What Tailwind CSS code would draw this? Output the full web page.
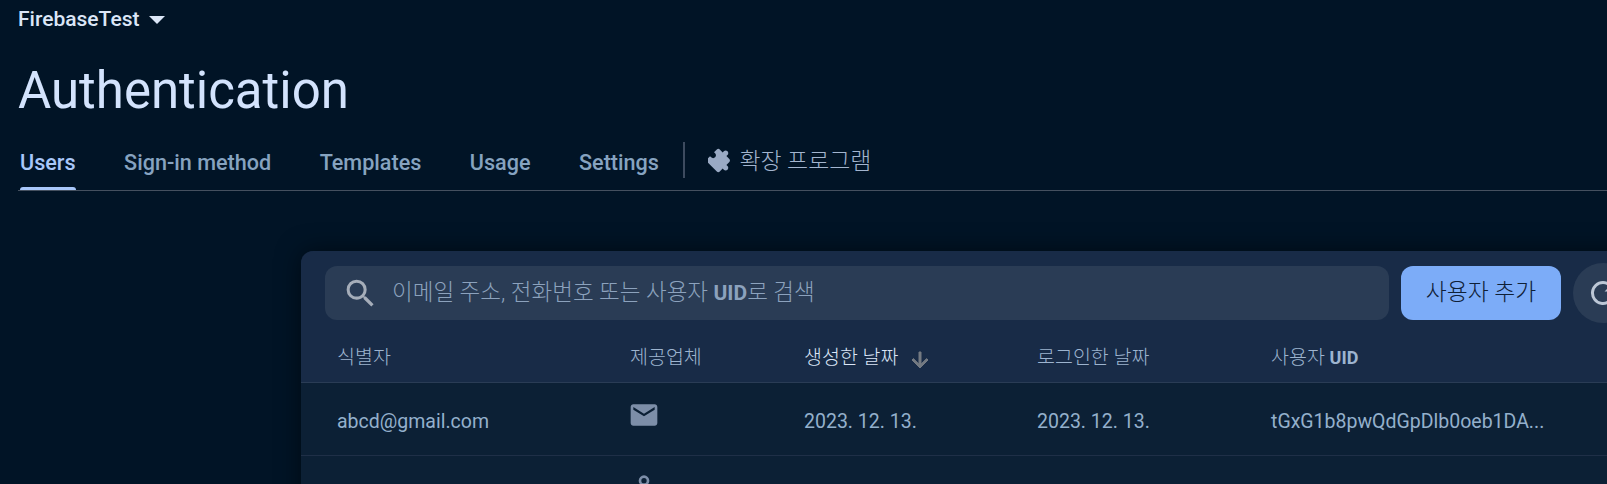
<!DOCTYPE html>
<html lang="ko">
<head>
<meta charset="UTF-8">
<title>Authentication</title>
<script src="https://cdn.jsdelivr.net/npm/@tailwindcss/browser@4"></script>
</head>
<body class="bg-[#011426] h-[484px] w-[1607px] overflow-hidden font-['Roboto','Noto_Sans_CJK_KR',sans-serif]">
    <!-- 헤더 -->
    <header class="pl-[18px]">
        <div class="flex items-center h-[40px] text-[#dbe6f7] text-[21px] font-medium">
            FirebaseTest
            <svg class="ml-[10px]" width="16" height="8" viewBox="0 0 16 8"><path d="M0 0h16l-8 8z" fill="#dbe6f7"/></svg>
        </div>
        <h1 class="mt-[21px] h-[60px] leading-[60px] text-[51px] text-[#d3e3fd]">Authentication</h1>
        <!-- 탭 -->
        <nav class="mt-[10px] flex items-center h-[60px] gap-[48.5px] border-b border-[#45505f] text-[21.6px] font-medium text-[#86a3c0]">
            <a class="relative ml-[2px] h-full flex items-center pt-[6px] text-[#a8c7fa]">Users
                <span class="absolute left-0 right-0 bottom-0 h-[3px] rounded-t-[3px] bg-[#a8c7fa]"></span>
            </a>
            <a class="pt-[6px]">Sign-in method</a>
            <a class="pt-[6px]">Templates</a>
            <a class="pt-[6px]">Usage</a>
            <a class="pt-[6px]">Settings</a>
            <div class="-ml-[24px] flex items-center gap-[6px] font-normal text-[#a3b5cf]">
                <span class="w-[2px] h-[36px] bg-[#3d4b5f] mr-[17px]"></span>
                <svg width="25" height="25" viewBox="0 0 24 24"><path transform="rotate(45 12 12)" d="M20.5 11H19V7c0-1.1-.9-2-2-2h-4V3.5C13 2.12 11.88 1 10.5 1S8 2.12 8 3.5V5H4c-1.1 0-1.99.9-1.99 2v3.8H3.5c1.49 0 2.7 1.21 2.7 2.7s-1.21 2.7-2.7 2.7H2V20c0 1.1.9 2 2 2h13c1.1 0 2-.9 2-2v-4h1.5c1.38 0 2.5-1.12 2.5-2.5S21.88 11 20.5 11z" fill="#9aaac4"/></svg>
                <span class="text-[22.9px] font-light pt-[4px]">확장 프로그램</span>
            </div>
        </nav>
    </header>

    <!-- 카드 -->
    <section class="mt-[60px] ml-[301px] w-[1400px] h-[300px] rounded-tl-[12px] bg-[#0c2035] shadow-[0_0_24px_rgba(0,0,0,0.5)] overflow-hidden">
        <div class="bg-[#182b47]">
            <div class="flex items-center pl-[24px] pt-[12px] gap-[12px] h-[72px]">
                <div class="w-[1064px] h-[54px] rounded-[12px] bg-[#2a3c55] flex items-center pl-[17px] text-[#8ca2bd] text-[22.5px]">
                    <svg class="mr-[13px]" width="37" height="37" viewBox="0 0 24 24"><path d="M15.5 14h-.79l-.28-.27A6.47 6.47 0 0 0 16 9.5 6.5 6.5 0 1 0 9.5 16c1.61 0 3.09-.59 4.23-1.57l.27.28v.79l5 4.99L20.49 19l-4.99-5zm-6 0C7.01 14 5 11.99 5 9.5S7.01 5 9.5 5 14 7.01 14 9.5 11.99 14 9.5 14z" fill="#a5adb9"/></svg>
                    <span class="font-light">이메일 주소, 전화번호 또는 사용자 <b class="font-bold text-[21px]">UID</b>로 검색</span>
                </div>
                <button class="w-[160px] h-[54px] rounded-[12px] bg-[#7cacf8] text-[#0f2036] text-[22.8px] font-light">사용자 추가</button>
                <div class="w-[60px] h-[60px] rounded-full bg-[#2a3c55] flex items-center justify-center">
                    <svg width="36" height="36" viewBox="0 0 24 24"><path d="M17.65 6.35A7.96 7.96 0 0 0 12 4a8 8 0 1 0 7.73 10h-2.08A6 6 0 1 1 12 6c1.66 0 3.14.69 4.22 1.78L13 11h7V4l-2.35 2.35z" fill="#bcc7d6"/></svg>
                </div>
            </div>
            <div class="flex items-center h-[60px] pl-[36px] pt-[10px] border-b border-[#2a3c55] text-[19.5px] font-light text-[#9db4cf]">
                <div class="w-[293px]">식별자</div>
                <div class="w-[174px]">제공업체</div>
                <div class="w-[233px] flex items-center text-[#dbe6f7]">생성한 날짜
                    <svg class="ml-[10px] mt-[4px]" width="24" height="24" viewBox="0 0 24 24"><path d="M20 12l-1.41-1.41L13 16.17V4h-2v12.17l-5.58-5.59L4 12l8 8 8-8z" fill="#747a82" stroke="#747a82"/></svg>
                </div>
                <div class="w-[234px]">로그인한 날짜</div>
                <div>사용자 <b class="font-bold text-[18px]">UID</b></div>
            </div>
        </div>
        <div class="flex items-center h-[73px] pl-[36px] border-b border-[#1f2f47] text-[19.5px] text-[#94b0cc]">
            <div class="w-[293px] pt-[6px]">abcd@gmail.com</div>
            <div class="w-[174px] -mt-[8px]">
                <svg width="32" height="32" viewBox="0 0 24 24" class="-ml-[2px]"><path d="M20 4H4c-1.1 0-2 .9-2 2v12c0 1.1.9 2 2 2h16c1.1 0 2-.9 2-2V6c0-1.1-.9-2-2-2zm0 4l-8 5-8-5V6l8 5 8-5v2z" fill="#7d8ea8"/></svg>
            </div>
            <div class="w-[233px] pt-[6px]">2023. 12. 13.</div>
            <div class="w-[234px] pt-[6px]">2023. 12. 13.</div>
            <div class="pt-[6px]">tGxG1b8pwQdGpDlb0oeb1DA...</div>
        </div>
        <div class="flex items-start h-[73px] pl-[36px] pt-[14px] text-[19.5px] text-[#94b0cc]">
            <div class="w-[293px]"></div>
            <div class="w-[174px]">
                <svg width="32" height="32" viewBox="0 0 24 24" class="-ml-[2px]"><path d="M12 6a2 2 0 1 1 0 4 2 2 0 0 1 0-4m0 10c2.7 0 5.8 1.29 6 2H6c.23-.72 3.31-2 6-2M12 4a4 4 0 1 0 0 8 4 4 0 0 0 0-8zm0 10c-2.67 0-8 1.34-8 4v2h16v-2c0-2.66-5.33-4-8-4z" fill="#7d8ea8"/></svg>
            </div>
        </div>
    </section>
</body>
</html>
